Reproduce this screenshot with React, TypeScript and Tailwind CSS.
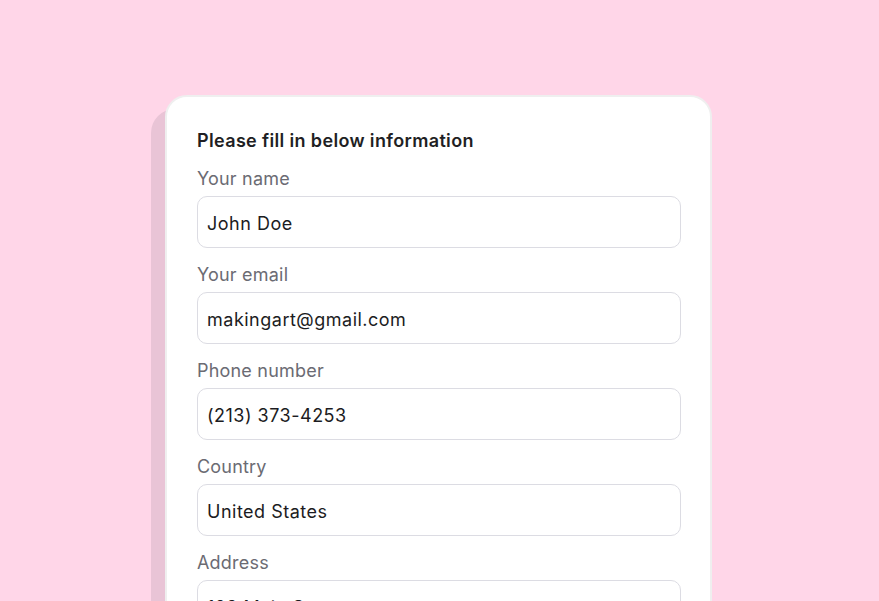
const fields = [
  { label: 'Your name', value: 'John Doe' },
  { label: 'Your email', value: 'makingart@gmail.com' },
  { label: 'Phone number', value: '(213) 373-4253' },
  { label: 'Country', value: 'United States' },
  { label: 'Address', value: '123 Main St' },
]

const App = () => {
  return (
    <div
      className="h-[601px] w-full overflow-hidden bg-[#ffd6e8] pt-[95px]"
      style={{ fontFamily: 'Inter, "Noto Sans", sans-serif' }}
    >
      {/* Card with a stacked back card */}
      <div className="relative mx-auto w-[547px] -translate-x-[1px]">
        <div className="absolute left-[-14px] top-[14px] h-[700px] w-full rounded-[24px] bg-[#e9c4d6]" />
        <div className="relative h-[700px] rounded-[22px] border-2 border-[#efefef] bg-white pl-[30px] pr-[29px] pt-[32px]">
          <h1 className="text-[18px] font-semibold leading-6 tracking-[0.35px] text-[#1f1f24]">Please fill in below information</h1>
          <div className="mt-[14px] flex flex-col gap-[15px]">
            {fields.map((f) => (
              <div key={f.label}>
                <label className="block text-[18px] leading-6 tracking-[0.2px] text-[#6b6b73]">{f.label}</label>
                <input
                  readOnly
                  value={f.value}
                  className="mt-[5px] block h-[52px] w-full rounded-[10px] border-[1.5px] border-[#dcdce3] bg-white pl-[9px] pt-[2px] text-[18px] tracking-[0.5px] text-[#1c1c22] outline-none"
                />
              </div>
            ))}
          </div>
        </div>
      </div>
    </div>
  )
}

export default App
